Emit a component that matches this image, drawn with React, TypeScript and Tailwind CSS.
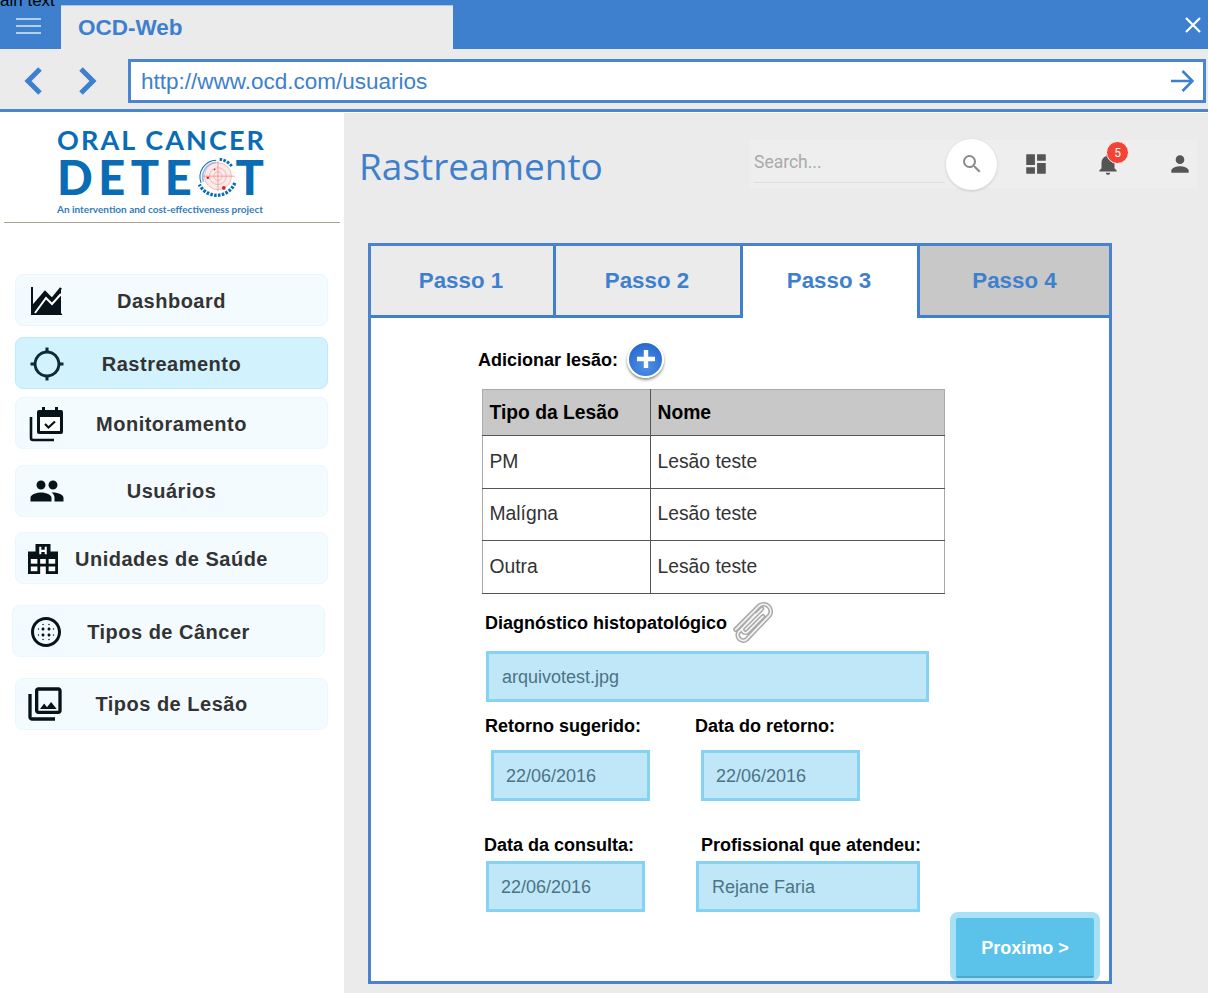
import { MdBlurCircular, MdDashboard, MdGpsNotFixed, MdNotifications, MdOutlinePhotoLibrary, MdPeople, MdPerson, MdSearch } from 'react-icons/md';
import type { ReactNode } from 'react';

function ChartIcon() {
  return (
    <svg width="31" height="28" viewBox="0 0 31 28" fill="none" className="ml-[2px]">
      <path d="M2 19L14 5L21 12L30 1V27.5H2Z" fill="#06141a" />
      <path d="M1 0V27.5H31" stroke="#06141a" strokeWidth="2" />
      <path d="M2 19L14 5L21 12L30 1" stroke="#06141a" strokeWidth="2.4" />
      <path d="M4 26L15 11L21 17L30 7" stroke="#fff" strokeWidth="2" />
    </svg>
  );
}

function CalendarIcon() {
  return (
    <svg width="36" height="36" viewBox="0 0 36 36" fill="none">
      <path d="M2 11V32a2 2 0 0 0 2 2H25" stroke="#06141a" strokeWidth="2.6" />
      <path d="M8 6a2 2 0 0 1 2-2h22a2 2 0 0 1 2 2v20a2 2 0 0 1-2 2H10a2 2 0 0 1-2-2Z" fill="#06141a" />
      <rect x="13" y="1" width="3" height="6" fill="#06141a" />
      <rect x="26" y="1" width="3" height="6" fill="#06141a" />
      <rect x="11" y="11" width="20" height="14" fill="#fff" />
      <path d="M16 18l3.5 3.5L26 15.5" stroke="#06141a" strokeWidth="2.2" />
    </svg>
  );
}

function HospitalIcon() {
  return (
    <svg width="30" height="30" viewBox="0 0 32 32" className="ml-[-1px]">
      <path d="M0 32V8H8V0H24V8H32V32Z" fill="#06141a" />
      <path d="M12 3h2.2v3.2h3.6V3H20v8h-2.2V8.4h-3.6V11H12Z" fill="#fff" />
      <rect x="3" y="16" width="7" height="5" fill="#fff" />
      <rect x="22" y="16" width="7" height="5" fill="#fff" />
      <rect x="13" y="16" width="6" height="5" fill="#fff" />
      <rect x="3" y="24" width="7" height="5" fill="#fff" />
      <rect x="22" y="24" width="7" height="5" fill="#fff" />
      <rect x="13" y="24" width="6" height="8" fill="#fff" />
    </svg>
  );
}

function TargetMark() {
  return (
    <svg width="48" height="48" viewBox="0 0 48 48" fill="none" className="mx-[-1px]">
      <path d="M6 31A20 20 0 0 1 24 4" stroke="#0a6cb5" strokeWidth="1.2" />
      <path d="M9 30A17 17 0 0 1 24 7" stroke="#8fc0e2" strokeWidth="2" />
      <path d="M28 3A21 21 0 0 1 43 12" stroke="#0a6cb5" strokeWidth="3.5" strokeDasharray="3 1.6" />
      <path d="M46 31A23 23 0 0 1 4 33" stroke="#0a6cb5" strokeWidth="4" strokeDasharray="3 1.6" />
      <circle cx="26" cy="23" r="16" fill="#fde9e9" />
      <circle cx="26" cy="23" r="16" stroke="#eba3a3" strokeWidth="0.8" />
      <circle cx="26" cy="23" r="10" stroke="#eba3a3" strokeWidth="0.8" />
      <circle cx="26" cy="23" r="5" stroke="#eba3a3" strokeWidth="0.8" />
      <path d="M8 23H46M26 5V41" stroke="#e57f7f" strokeWidth="0.8" />
      <circle cx="14" cy="25" r="1.5" fill="#e01b24" />
      <circle cx="22" cy="15" r="1" fill="#e01b24" />
      <circle cx="33" cy="37" r="2.2" fill="#e01b24" />
    </svg>
  );
}

function Logo() {
  return (
    <div className="ml-[57px] flex w-[207px] flex-col font-['Lato',sans-serif] text-[#0a6cb5]">
      <div className="mt-[15px] h-[24px] whitespace-nowrap text-[27px] leading-[24px] font-bold tracking-[2.1px]">ORAL CANCER</div>
      <div className="mt-[5px] flex h-[40px] items-center justify-between text-[47px] leading-[40px] font-black">
        <span className="inline-block tracking-[5.5px]">DETE</span>
        <TargetMark />
        <span className="inline-block">T</span>
      </div>
      <div className="mt-[6px] whitespace-nowrap text-[10px] leading-[12px] font-bold text-[#2f7db8]">
        An intervention and cost-effectiveness project
      </div>
    </div>
  );
}

function NavItem({ icon, label, active, className }: { icon: ReactNode; label: string; active?: boolean; className: string }) {
  return (
    <div
      className={`${className} grid h-[52px] w-[313px] grid-cols-[1fr_auto_1fr] items-center rounded-lg border ${
        active ? 'border-[#bdeafc] bg-[#d2f2fe]' : 'border-[#e8f8fe] bg-[#f3fbff]'
      }`}
    >
      <div className="flex justify-start pl-[13px] text-[#06141a]">{icon}</div>
      <span className="text-[20px] font-bold tracking-[0.5px] text-[#333]">{label}</span>
      <div />
    </div>
  );
}

function Tab({ label, className }: { label: string; className: string }) {
  return (
    <div className={`${className} flex h-full items-center justify-center border-[#3f80cb] text-[22.3px] font-bold text-[#3e80ce]`}>
      {label}
    </div>
  );
}

function Field({ value, className }: { value: string; className: string }) {
  return (
    <input
      readOnly
      value={value}
      className={`${className} h-[51px] border-[3px] border-[#85d2f2] bg-[#bfe7f8] pt-[2px] text-[18px] text-[#4d7384] outline-none`}
    />
  );
}

const rows = [
  ['PM', 'Lesão teste'],
  ['Malígna', 'Lesão teste'],
  ['Outra', 'Lesão teste'],
];

const clipPath = 'M30 8L9 29a5 5 0 0 0 7 7L37 14a6.5 6.5 0 0 0-9-9L6 27a4 4 0 0 0 0 0M24 13L13 25a2.5 2.5 0 0 0 4 4L31 15';

export default function App() {
  return (
    <div className="relative h-[993px] w-[1208px] overflow-hidden bg-white font-['Liberation_Sans',Arial,sans-serif]">
      <span className="absolute top-[-12px] left-0 z-10 text-[17px] text-black">ain text</span>

      {/* browser chrome */}
      <div className="flex h-[49px] items-end bg-[#3e80ce]">
        <div className="flex h-full w-[61px] flex-col justify-center gap-[5px] pt-[2px] pl-[16px]">
          <span className="block h-[2px] w-[25px] bg-[#b3cfef]" />
          <span className="block h-[2px] w-[25px] bg-[#b3cfef]" />
          <span className="block h-[2px] w-[25px] bg-[#b3cfef]" />
        </div>
        <div className="flex h-[44px] w-[392px] items-center border-t border-[#a9c8ec] bg-[#ebebeb] pl-[17px] text-[22.5px] font-bold text-[#3e80ce]">
          OCD-Web
        </div>
        <svg width="16" height="16" viewBox="0 0 16 16" className="mb-[16px] ml-[732px]" fill="none">
          <path d="M1 1L15 15M15 1L1 15" stroke="#fff" strokeWidth="2.2" />
        </svg>
      </div>
      <div className="flex h-[60px] items-start bg-[#ebebeb] pt-[10px]">
        <svg width="20" height="28" viewBox="0 0 20 28" className="mt-[8px] ml-[23px]" fill="none">
          <path d="M17 2L5 14L17 26" stroke="#3e80ce" strokeWidth="5" />
        </svg>
        <svg width="20" height="28" viewBox="0 0 20 28" className="mt-[8px] ml-[35px]" fill="none">
          <path d="M3 2L15 14L3 26" stroke="#3e80ce" strokeWidth="5" />
        </svg>
        <div className="ml-[30px] flex h-[44px] w-[1078px] items-center justify-between border-[3px] border-[#4a86cf] bg-white pr-[9px] pl-[10px] text-[22.5px] text-[#3e80ce]">
          <span className="pt-[1px]">http://www.ocd.com/usuarios</span>
          <svg width="24" height="24" viewBox="0 0 24 24" fill="none">
            <path d="M1 12H22.5M12.5 2L22.5 12L12.5 22" stroke="#3e80ce" strokeWidth="2.6" />
          </svg>
        </div>
      </div>
      <div className="h-[3px] bg-[#4a86cf]" />
      <div className="h-[1px] bg-white" />

      <div className="flex h-[880px]">
        {/* sidebar */}
        <aside className="h-full w-[344px] shrink-0 bg-white">
          <div className="mr-[4px] ml-[4px] h-[110px] border-b border-[#a8a294]">
            <div className="ml-[-4px]">
              <Logo />
            </div>
          </div>
          <nav className="flex flex-col items-start">
            <NavItem className="mt-[51px] ml-[15px] pt-[1px]" icon={<ChartIcon />} label="Dashboard" />
            <NavItem className="mt-[11px] ml-[15px] pt-[1px]" icon={<MdGpsNotFixed size={36} color="#0c2a38" />} label="Rastreamento" active />
            <NavItem className="mt-[8px] ml-[15px] pt-[1px]" icon={<CalendarIcon />} label="Monitoramento" />
            <NavItem className="mt-[16px] ml-[15px]" icon={<MdPeople size={36} />} label="Usuários" />
            <NavItem className="mt-[15px] ml-[15px] pt-[1px]" icon={<HospitalIcon />} label="Unidades de Saúde" />
            <NavItem className="mt-[21px] ml-[12px] pt-[1px]" icon={<MdBlurCircular size={36} className="ml-[2px]" />} label="Tipos de Câncer" />
            <NavItem className="mt-[21px] ml-[15px]" icon={<MdOutlinePhotoLibrary size={40} className="ml-[-4px]" />} label="Tipos de Lesão" />
          </nav>
        </aside>

        {/* main */}
        <main className="h-full flex-1 bg-[#ebebeb]">
          <div className="flex h-[130px] items-start pt-[27px]">
            <h1 className="mt-[-1px] ml-[15px] w-[391px] font-['Open_Sans',sans-serif] text-[37px] leading-[54px] font-medium text-[#3e80ce]">Rastreamento</h1>
            <div className="flex h-[48px] w-[447px] items-center bg-[#eeeeee] font-['Roboto',sans-serif]">
              <div className="mt-[-4px] h-[43px] w-[196px] pl-[4px]">
                <div className="h-[42px] w-[191px] border-b border-[#dedede] pt-[9px] text-[17.5px] leading-[24px] text-[#aaaaaa]">Search...</div>
              </div>
              <div className="flex h-[51px] w-[51px] items-center justify-center rounded-full bg-white shadow-[0_1px_3px_rgba(0,0,0,0.15)]">
                <MdSearch size={24} color="#8a8a8a" />
              </div>
              <MdDashboard size={26} color="#555" className="ml-[26px]" />
              <div className="relative ml-[46px]">
                <MdNotifications size={26} color="#555" />
                <span className="absolute top-[-10px] left-[11px] flex h-[23px] w-[23px] items-center justify-center rounded-full border border-[#f5f5f5] bg-[#f44336] text-[12px] text-white">
                  5
                </span>
              </div>
              <MdPerson size={26} color="#555" className="ml-[46px]" />
            </div>
          </div>

          {/* wizard card */}
          <section className="ml-[24px] h-[741px] w-[744px] border-[3px] border-[#4a83cb] bg-white">
            <div className="flex h-[72px]">
              <Tab label="Passo 1" className="w-[185px] border-r-[3px] border-b-[3px] bg-[#ebebeb] pr-[2px]" />
              <Tab label="Passo 2" className="w-[187px] border-r-[3px] border-b-[3px] bg-[#ebebeb] pr-[2px]" />
              <Tab label="Passo 3" className="w-[177px] border-r-[3px] bg-white pr-[2px] pb-[3px]" />
              <Tab label="Passo 4" className="flex-1 border-b-[3px] bg-[#c8c8c8]" />
            </div>

            <div className="mt-[24px] ml-[107px] flex h-[34px] items-center">
              <span className="pt-[2px] text-[18px] font-bold text-black">Adicionar lesão:</span>
              <div className="ml-[9px] flex h-[37px] w-[37px] shrink-0 items-center justify-center rounded-full border-2 border-white bg-[radial-gradient(circle_at_50%_70%,#4d92ea,#1f5fc4)] shadow-[0_2px_3px_rgba(0,0,0,0.45)]">
                <svg width="22" height="22" viewBox="0 0 22 22">
                  <path d="M11 2V20M2 11H20" stroke="#fff" strokeWidth="4.4" />
                </svg>
              </div>
            </div>

            <table className="mt-[13px] ml-[111px] w-[463px] border-collapse text-[19.3px] text-[#333]">
              <thead>
                <tr className="h-[46px] bg-[#c8c8c8] text-left text-black">
                  <th className="w-[168px] border border-[#555] border-t-[#aaa] border-l-[#aaa] pt-[2px] pl-[6.5px] font-bold">Tipo da Lesão</th>
                  <th className="border border-[#555] border-t-[#aaa] border-r-[#aaa] pt-[2px] pl-[6.5px] font-bold">Nome</th>
                </tr>
              </thead>
              <tbody>
                {rows.map((row) => (
                  <tr key={row[0]} className="h-[52.5px]">
                    <td className="border border-[#555] border-l-[#aaa] pt-[1px] pl-[6.5px]">{row[0]}</td>
                    <td className="border border-[#555] border-r-[#aaa] pt-[1px] pl-[6.5px]">{row[1]}</td>
                  </tr>
                ))}
              </tbody>
            </table>

            <div className="mt-[9px] ml-[114px] flex h-[40px] items-center">
              <span className="pt-[1px] text-[18px] font-bold text-black">Diagnóstico histopatológico</span>
              <svg width="46" height="46" viewBox="0 0 42 42" fill="none" className="ml-[2px]">
                <path d={clipPath} stroke="#a9a9a9" strokeWidth="4.4" strokeLinecap="round" />
                <path d={clipPath} stroke="#f2f2f2" strokeWidth="1.6" strokeLinecap="round" />
              </svg>
            </div>

            <Field value="arquivotest.jpg" className="mt-[8px] ml-[115px] block w-[443px] pl-[13px]" />

            <div className="mt-[12px] flex h-[24px] items-center pt-[1px] text-[18px] font-bold text-black">
              <span className="ml-[114px] w-[210px]">Retorno sugerido:</span>
              <span>Data do retorno:</span>
            </div>
            <div className="mt-[12px] flex">
              <Field value="22/06/2016" className="ml-[120px] w-[159px] pl-[12px]" />
              <Field value="22/06/2016" className="ml-[51px] w-[159px] pl-[12px]" />
            </div>

            <div className="mt-[32px] flex h-[24px] items-center pt-[1px] text-[18px] font-bold text-black">
              <span className="ml-[113px] w-[217px]">Data da consulta:</span>
              <span>Profissional que atendeu:</span>
            </div>
            <div className="mt-[4px] flex">
              <Field value="22/06/2016" className="ml-[115px] w-[159px] pl-[12px]" />
              <Field value="Rejane Faria" className="ml-[51px] w-[224px] pl-[13px]" />
            </div>

            <div className="ml-[579px] flex h-[69px] w-[150px] items-end justify-center rounded-[8px] bg-[#a8e0f5] pb-[3px]">
              <button
                type="button"
                className="h-[60px] w-[138px] rounded-[2px] border-b-2 border-[#4ea6ca] bg-[#5bc3ea] pt-[3px] text-[18px] font-bold text-white"
              >
                Proximo &gt;
              </button>
            </div>
          </section>
        </main>
      </div>
    </div>
  );
}
